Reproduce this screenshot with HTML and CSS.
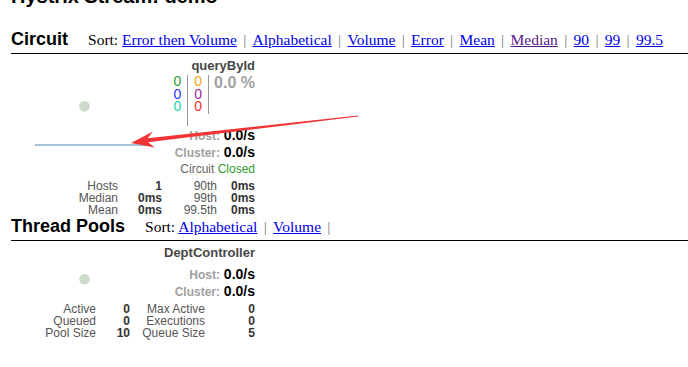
FILE: index.html
```html
<!DOCTYPE html>
<html lang="en">
<head>
    <meta charset="UTF-8">
    <title>Hystrix Stream: demo</title>
    <link rel="stylesheet" href="styles.css">
</head>
<body>

<div class="page">

    <h1 class="stream-title">Hystrix Stream: demo</h1>

    <div class="section-head">
        <h2>Circuit</h2>
        <div class="sort">Sort: <a href="#">Error then Volume</a><span class="sep">|</span><a href="#">Alphabetical</a><span class="sep">|</span><a href="#">Volume</a><span class="sep">|</span><a href="#">Error</a><span class="sep">|</span><a href="#">Mean</a><span class="sep">|</span><a href="#" class="visited">Median</a><span class="sep">|</span><a href="#">90</a><span class="sep">|</span><a href="#">99</a><span class="sep">|</span><a href="#">99.5</a></div>
    </div>

    <div class="monitor circuit">
        <svg class="chart" width="245" height="160">
            <circle cx="74.5" cy="52.3" r="5.3" fill="#cadbca"></circle>
            <line x1="25" y1="91" x2="138" y2="91" stroke="#a6c3dc" stroke-width="2"></line>
        </svg>

        <div class="name">queryById</div>

        <div class="counters">
            <div class="col col-a">
                <div class="success">0</div>
                <div class="short">0</div>
                <div class="bad">0</div>
            </div>
            <div class="col col-b">
                <div class="timeout">0</div>
                <div class="rejected">0</div>
                <div class="failure">0</div>
            </div>
            <div class="percent">0.0 %</div>
        </div>

        <div class="rate host"><span class="label">Host:</span> <span class="value">0.0/s</span></div>
        <div class="rate"><span class="label">Cluster:</span> <span class="value">0.0/s</span></div>

        <div class="status">Circuit <span class="closed">Closed</span></div>

        <div class="stats circuit-stats">
            <span class="k">Hosts</span><span class="v">1</span><span class="k">90th</span><span class="v">0ms</span>
            <span class="k">Median</span><span class="v">0ms</span><span class="k">99th</span><span class="v">0ms</span>
            <span class="k">Mean</span><span class="v">0ms</span><span class="k">99.5th</span><span class="v">0ms</span>
        </div>
    </div>

    <div class="section-head">
        <h2>Thread Pools</h2>
        <div class="sort">Sort: <a href="#">Alphabetical</a><span class="sep">|</span><a href="#">Volume</a><span class="sep">|</span></div>
    </div>

    <div class="monitor pool">
        <svg class="chart" width="245" height="100">
            <circle cx="74.5" cy="38.3" r="5.3" fill="#cadbca"></circle>
        </svg>

        <div class="name">DeptController</div>

        <div class="rate host pool-host"><span class="label">Host:</span> <span class="value">0.0/s</span></div>
        <div class="rate"><span class="label">Cluster:</span> <span class="value">0.0/s</span></div>

        <div class="stats pool-stats">
            <span class="k">Active</span><span class="v">0</span><span class="k">Max Active</span><span class="v">0</span>
            <span class="k">Queued</span><span class="v">0</span><span class="k">Executions</span><span class="v">0</span>
            <span class="k">Pool Size</span><span class="v">10</span><span class="k">Queue Size</span><span class="v">5</span>
        </div>
    </div>

</div>

<!-- annotation arrow drawn on top of the screenshot -->
<svg class="arrow" width="688" height="367">
    <polygon points="357.9,115.5 147.7,138.2 152.9,131.6 131,143 154.7,147.4 148.1,142.2 358.1,116.5" fill="#f23434"></polygon>
</svg>

</body>
</html>
```

FILE: styles.css
```css
body {
    margin: 0;
    background: #fff;
    font-family: "Liberation Sans", Arial, sans-serif;
    position: relative;
    overflow: hidden;
    height: 367px;
}

.page {
    padding-left: 11px;
}

.stream-title {
    margin: -15px 0 0 0;
    height: 23px;
    line-height: 23px;
    font-size: 20px;
    font-weight: bold;
    color: #000;
}

.section-head {
    display: flex;
    align-items: baseline;
    margin-top: 22px;
    padding-bottom: 4px;
    border-bottom: 1px solid #000;
}

.section-head h2 {
    margin: 0;
    font-size: 18px;
    line-height: 18px;
    font-weight: bold;
    color: #000;
}

.sort {
    margin-left: 20px;
    font-family: "Liberation Serif", "Times New Roman", serif;
    font-size: 15.5px;
    line-height: 18px;
    color: #000;
}

.sort a {
    color: #0000ee;
}

.sort a.visited {
    color: #551a8b;
}

.sep {
    margin: 0 6.3px;
    color: #777;
}

.monitor + .section-head {
    margin-top: 0;
}

.monitor {
    position: relative;
    width: 245px;
    margin-left: -1px;
    padding-top: 4px;
    padding-bottom: 1px;
    text-align: right;
    color: #333;
}

.chart {
    position: absolute;
    left: 0;
    top: 0;
}

.name {
    position: relative;
    font-size: 13px;
    line-height: 16px;
    font-weight: bold;
    color: #474747;
}

.counters {
    position: relative;
    display: flex;
    justify-content: flex-end;
    align-items: flex-start;
    margin-top: 1px;
    font-size: 14px;
    line-height: 12.5px;
}

.col {
    padding: 0 6px;
    border-right: 1px solid #999;
}

.col-a {
    height: 51px;
}

.col-b {
    height: 39px;
}

.percent {
    padding-left: 5px;
    font-size: 16px;
    line-height: 15px;
    font-weight: bold;
    color: #a0a0a0;
}

.success { color: #2e9c2e; }
.short { color: #3030ff; }
.bad { color: #1fd8a8; }
.timeout { color: #ffa020; }
.rejected { color: #9a2a9a; }
.failure { color: #ff2a2a; }

.rate {
    position: relative;
    font-size: 14px;
    line-height: 17px;
    height: 17px;
}

.rate.host {
    margin-top: 1px;
}

.rate.pool-host {
    margin-top: 5px;
}

.rate .label {
    font-size: 12px;
    font-weight: bold;
    color: #a0a0a0;
}

.rate .value {
    font-size: 14px;
    font-weight: bold;
    color: #000;
}

.status {
    margin-top: 1px;
    font-size: 12px;
    line-height: 14px;
    color: #666;
}

.closed {
    color: #2e9c2e;
}

.stats {
    display: grid;
    justify-content: end;
    margin-top: 4px;
    font-size: 12px;
    line-height: 12px;
}

.circuit-stats {
    grid-template-columns: 58px 44px 55px 38px;
}

.pool-stats {
    grid-template-columns: 56px 34px 75px 50px;
    margin-top: 3px;
}

.stats .k {
    color: #555;
}

.stats .v {
    font-weight: bold;
    color: #333;
}

.arrow {
    position: absolute;
    left: 0;
    top: 0;
    pointer-events: none;
}
```
